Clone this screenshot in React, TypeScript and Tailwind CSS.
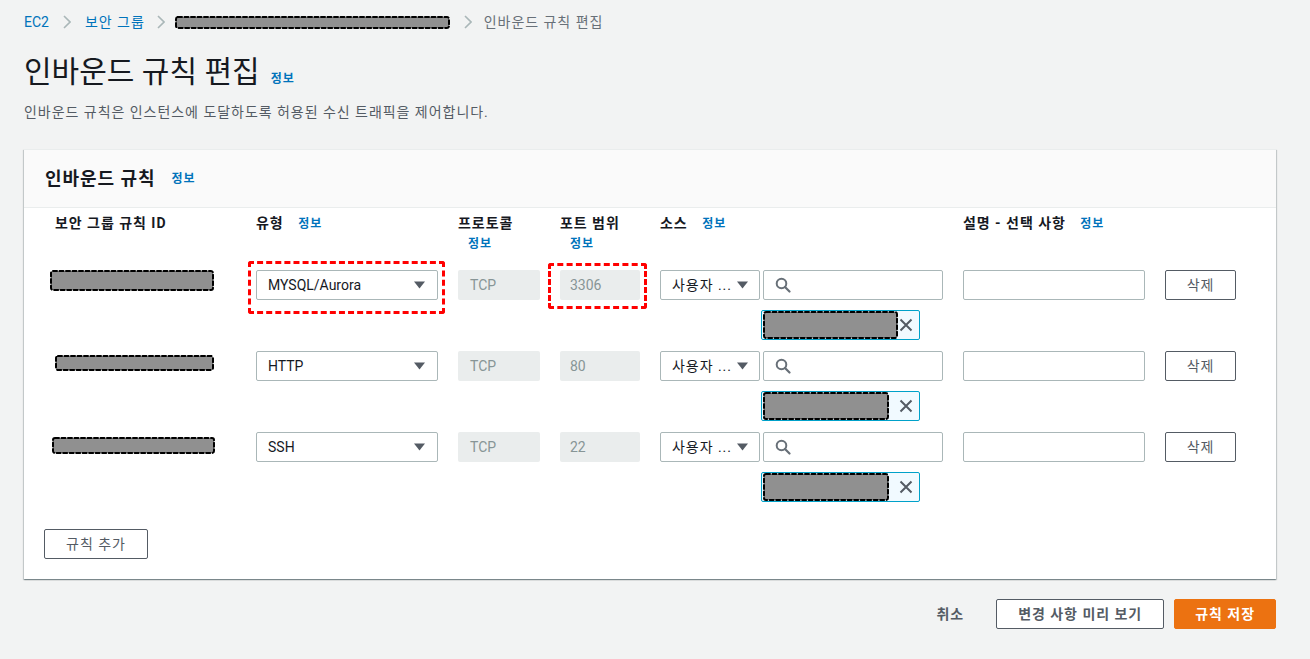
import React from 'react';

const FONT = "font-['Roboto','Noto_Sans_CJK_KR',sans-serif]";

const Info = ({ className = '' }: { className?: string }) => (
  <span className={`inline-block whitespace-nowrap text-[12px] leading-[20px] font-bold text-[#0073bb] ${className}`}>정보</span>
);

// masked values in the screenshot
const Redact = ({ w, h, className = '' }: { w: number; h: number; className?: string }) => (
  <svg width={w} height={h} className={`block shrink-0 ${className}`}>
    <rect
      x="1"
      y="1"
      width={w - 2}
      height={h - 2}
      rx="2"
      fill="#909090"
      stroke="#000"
      strokeWidth="2"
      strokeDasharray="4 2.5"
      strokeLinecap="round"
    />
  </svg>
);

const Chevron = ({ className = 'mx-[14px]' }: { className?: string }) => (
  <svg width="8" height="14" viewBox="0 0 8 14" className={`shrink-0 ${className}`}>
    <path d="M1 1l6 6-6 6" fill="none" stroke="#aab7b8" strokeWidth="1.6" />
  </svg>
);

const Caret = () => (
  <svg width="11" height="8" viewBox="0 0 11 8" className="shrink-0">
    <path d="M0 0.5h11L5.5 7.5z" fill="#545b64" />
  </svg>
);

const SearchIcon = () => (
  <svg width="16" height="16" viewBox="0 0 16 16" className="shrink-0">
    <circle cx="6.5" cy="6.5" r="4.8" fill="none" stroke="#687078" strokeWidth="2" />
    <path d="M10 10l4.5 4.5" stroke="#687078" strokeWidth="2.2" strokeLinecap="round" />
  </svg>
);

const XIcon = () => (
  <svg width="14" height="14" viewBox="0 0 14 14" className="shrink-0">
    <path d="M1.5 1.5l11 11M12.5 1.5l-11 11" stroke="#545b64" strokeWidth="2" />
  </svg>
);

type Rule = {
  type: string;
  port: string;
  id: { w: number; h: number; ml: string; mt: string };
  tokenW: number;
  mark?: boolean;
};

const rules: Rule[] = [
  { type: 'MYSQL/Aurora', port: '3306', id: { w: 164, h: 21, ml: 'ml-[6px]', mt: 'mt-0' }, tokenW: 135, mark: true },
  { type: 'HTTP', port: '80', id: { w: 159, h: 16, ml: 'ml-[11px]', mt: 'mt-[4px]' }, tokenW: 126 },
  { type: 'SSH', port: '22', id: { w: 163, h: 17, ml: 'ml-[8px]', mt: 'mt-[5px]' }, tokenW: 126 },
];

const GRID = 'grid grid-cols-[192px_182px_82px_80px_283px_182px_71px] gap-x-[20px]';

const RuleRow = ({ rule }: { rule: Rule }) => (
  <div className={`${GRID} items-start`}>
    <div>
      <Redact w={rule.id.w} h={rule.id.h} className={`${rule.id.ml} ${rule.id.mt}`} />
    </div>
    <div className="relative">
      <div className="h-[30px] flex items-center justify-between pl-[11px] pr-[12px] bg-white border border-[#aab7b8] rounded-[2px] text-[14px] tracking-normal text-[#16191f]">
        <span>{rule.type}</span>
        <Caret />
      </div>
      {rule.mark && (
        <div className="absolute -left-[8px] -top-[9px] -right-[7px] -bottom-[14px] border-[3px] border-dashed border-[#ff0000] rounded-[3px]" />
      )}
    </div>
    <div className="h-[30px] flex items-center pl-[12px] bg-[#eaeded] rounded-[2px] text-[14px] tracking-normal text-[#879596]">TCP</div>
    <div className="relative">
      <div className="h-[30px] flex items-center pl-[10px] bg-[#eaeded] rounded-[2px] text-[14px] tracking-normal text-[#879596]">{rule.port}</div>
      {rule.mark && (
        <div className="absolute -left-[12px] -top-[7px] -right-[7px] -bottom-[9px] border-[3px] border-dashed border-[#ff0000] rounded-[3px]" />
      )}
    </div>
    <div>
      <div className="flex gap-[3px]">
        <div className="w-[100px] h-[30px] flex items-center justify-between pl-[11px] pr-[11px] bg-white border border-[#aab7b8] rounded-[2px] text-[14px] text-[#16191f]">
          <span className="whitespace-nowrap">사용자 ...</span>
          <Caret />
        </div>
        <div className="flex-1 h-[30px] flex items-center pl-[11px] bg-white border border-[#aab7b8] rounded-[2px]">
          <SearchIcon />
        </div>
      </div>
      <div className="ml-[101px] mt-[10px] w-[159px] h-[30px] flex items-center justify-between pl-[1px] pr-[6px] bg-[#f1faff] border border-[#00a1c9] rounded-[2px]">
        <Redact w={rule.tokenW} h={28} />
        <XIcon />
      </div>
    </div>
    <div className="h-[30px] bg-white border border-[#aab7b8] rounded-[2px]" />
    <button className="h-[30px] bg-white border border-[#545b64] rounded-[2px] text-[14px] text-[#545b64]">삭제</button>
  </div>
);

export default function App() {
  return (
    <div className={`min-h-screen bg-[#f2f3f3] pl-[24px] pr-[34px] pt-[12px] pb-[30px] tracking-[0.06em] ${FONT}`}>
      {/* breadcrumb */}
      <nav className="flex items-center h-[20px] text-[14px] leading-[20px]">
        <span className="text-[#0073bb] tracking-normal">EC2</span>
        <Chevron />
        <span className="text-[#0073bb]">보안 그룹</span>
        <Chevron className="ml-[12px] mr-[10px]" />
        <Redact w={275} h={13} />
        <Chevron className="ml-[14px] mr-[12px]" />
        <span className="text-[#687078]">인바운드 규칙 편집</span>
      </nav>

      <div className="mt-[20px] flex items-end">
        <h1 className="text-[30px] leading-[40px] font-normal tracking-normal text-[#16191f]">인바운드 규칙 편집</h1>
        <Info className="ml-[11px] mb-[3px]" />
      </div>
      <p className="mt-[10px] text-[14px] leading-[20px] text-[#545b64]">
        인바운드 규칙은 인스턴스에 도달하도록 허용된 수신 트래픽을 제어합니다.
      </p>

      {/* panel */}
      <section className="mt-[27px] bg-white border-t border-[#eaeded] shadow-[0_1px_1px_0_rgba(0,28,36,0.3),1px_1px_1px_0_rgba(0,28,36,0.15),-1px_1px_1px_0_rgba(0,28,36,0.15)]">
        <div className="h-[58px] flex items-center pl-[21px] bg-[#fafafa] border-b border-[#eaeded]">
          <h2 className="text-[18px] leading-[24px] font-bold text-[#16191f]">인바운드 규칙</h2>
          <Info className="ml-[16px]" />
        </div>

        <div className="pl-[20px] pt-[5px] pb-[20px]">
          <div className={`${GRID} text-[14px] leading-[20px] font-bold text-[#16191f]`}>
            <div className="pl-[11px]">보안 그룹 규칙 ID</div>
            <div>
              유형 <Info className="ml-[10px]" />
            </div>
            <div>
              프로토콜 <Info className="ml-[10px]" />
            </div>
            <div>
              포트 범위 <Info className="ml-[10px]" />
            </div>
            <div>
              소스 <Info className="ml-[10px]" />
            </div>
            <div>
              설명 - 선택 사항 <Info className="ml-[10px]" />
            </div>
            <div />
          </div>

          <div className="mt-[16px] flex flex-col gap-[11px]">
            {rules.map((r) => (
              <RuleRow key={r.type} rule={r} />
            ))}
          </div>

          <button className="mt-[27px] w-[104px] h-[30px] bg-white border border-[#545b64] rounded-[2px] text-[14px] text-[#545b64]">
            규칙 추가
          </button>
        </div>
      </section>

      {/* footer actions */}
      <div className="mt-[20px] flex justify-end items-center gap-[10px] text-[14px]">
        <button className="h-[30px] px-[20px] mr-[2px] font-bold text-[#545b64]">취소</button>
        <button className="h-[30px] px-[21px] bg-white border border-[#545b64] rounded-[2px] font-bold text-[#545b64]">
          변경 사항 미리 보기
        </button>
        <button className="h-[30px] px-[20px] bg-[#ec7211] border border-[#ec7211] rounded-[2px] font-bold text-white">
          규칙 저장
        </button>
      </div>
    </div>
  );
}
